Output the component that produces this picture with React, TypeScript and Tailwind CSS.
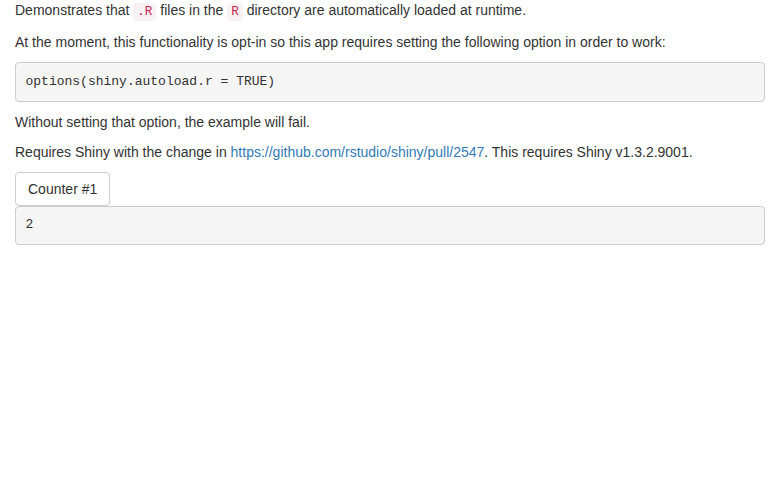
export default function App() {
  const mono = { fontFamily: '"Liberation Mono", "Courier New", monospace' };
  return (
    <div
      className="min-h-[493px] bg-white px-[15px] text-[14px] leading-[20px] text-[#333333]"
      style={{ fontFamily: '"Liberation Sans", Arial, sans-serif' }}
    >
      <p className="mb-[10px] h-[22px]">
        Demonstrates that{" "}
        <code
          className="rounded-[4px] bg-[#f9f2f4] px-[4px] py-[2px] text-[90%] text-[#c7254e]"
          style={mono}
        >
          .R
        </code>{" "}
        files in the{" "}
        <code
          className="rounded-[4px] bg-[#f9f2f4] px-[4px] py-[2px] text-[90%] text-[#c7254e]"
          style={mono}
        >
          R
        </code>{" "}
        directory are automatically loaded at runtime.
      </p>
      <p className="mb-[10px]">
        At the moment, this functionality is opt-in so this app requires setting the following option in order to work:
      </p>
      <pre
        className="mb-[10px] rounded-[4px] border border-[#cccccc] bg-[#f5f5f5] p-[9.5px] text-[13px] leading-[18.57px] text-[#333333]"
        style={mono}
      >
        options(shiny.autoload.r = TRUE)
      </pre>
      <p className="mb-[10px]">Without setting that option, the example will fail.</p>
      <p className="mb-[10px]">
        Requires Shiny with the change in{" "}
        <a className="text-[#337ab7]" href="#">
          https://github.com/rstudio/shiny/pull/2547
        </a>
        . This requires Shiny v1.3.2.9001.
      </p>
      <div className="flex flex-col">
        <div>
          <button className="h-[34px] rounded-[4px] border border-[#cccccc] bg-white px-[12px] py-[6px] text-[14px] leading-[20px] text-[#333333]">
            Counter #1
          </button>
        </div>
        <pre
          className="rounded-[4px] border border-[#cccccc] bg-[#f5f5f5] p-[9.5px] text-[13px] leading-[18.57px] text-[#333333]"
          style={mono}
        >
          2
        </pre>
      </div>
    </div>
  );
}
